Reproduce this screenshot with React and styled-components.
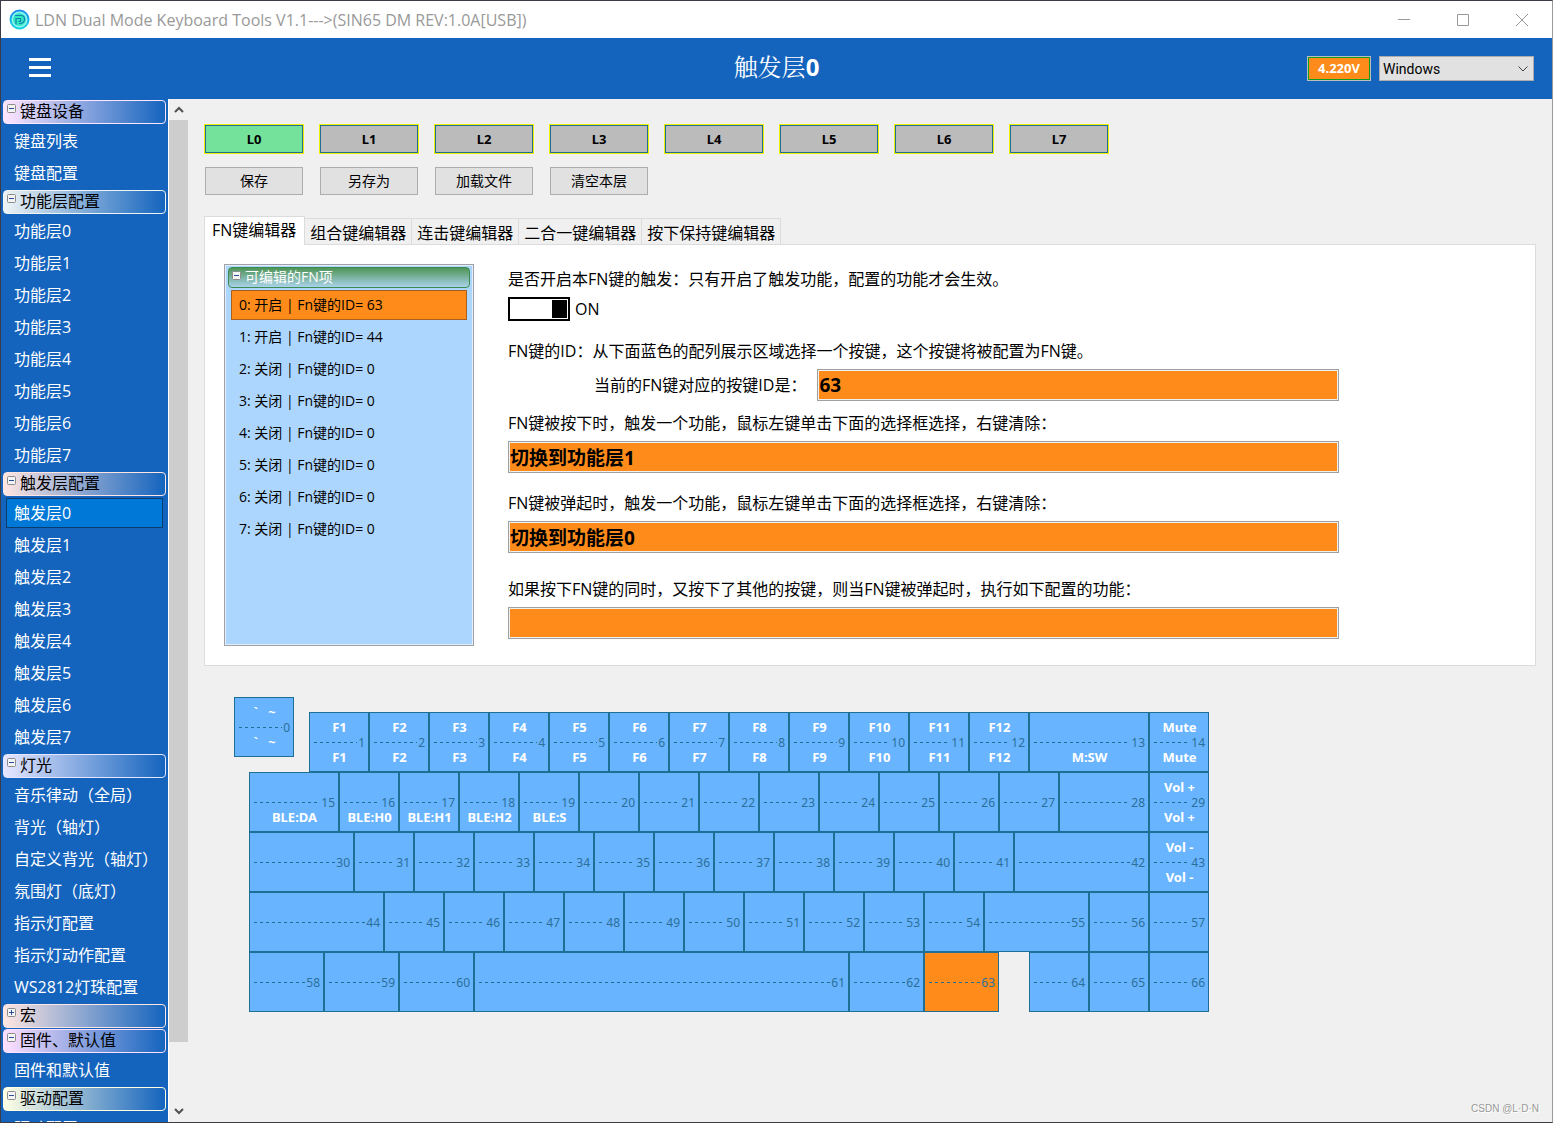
import React, { useState } from 'react';
import styled, { createGlobalStyle, css } from 'styled-components';

const GlobalStyle = createGlobalStyle`
  *, *::before, *::after {
    box-sizing: border-box;
  }
  body {
    margin: 0;
    background: #3c3c46;
    color: #000;
    font-family: "Open Sans", "Noto Sans CJK SC", sans-serif;
    font-size: 16px;
    line-height: 24px;
  }
  button, input, select {
    margin: 0;
    font: inherit;
    color: inherit;
  }
`

// frame
const Window = styled.div`
  position: relative;
  display: flex;
  flex-direction: column;
  height: 100vh;
  border: 1px solid #3c3c46;
  border-right-color: #9a9a9a;
  background: #f0f0f0;
  overflow: hidden;
`

const TitleBar = styled.header`
  display: flex;
  align-items: center;
  flex: none;
  height: 37px;
  padding: 0 1px 0 8px;
  background: #fff;
  color: #999;
`

const AppName = styled.span`
  flex: 1;
  padding-left: 5px;
`

const WindowButton = styled.button`
  display: flex;
  align-items: center;
  justify-content: center;
  width: 59px;
  height: 36px;
  padding: 0;
  border: 0;
  background: none;
  color: #999;
`

const Toolbar = styled.div`
  display: grid;
  grid-template-columns: 1fr auto 1fr;
  align-items: center;
  flex: none;
  height: 61px;
  padding: 0 18px;
  background: #1464be;
  color: #fff;
`

const MenuButton = styled.button`
  display: flex;
  flex-direction: column;
  gap: 5px;
  width: 22px;
  margin: 0 0 2px 10px;
  padding: 0;
  border: 0;
  background: none;
  span {
    height: 3px;
    background: #fff;
  }
`

const PageTitle = styled.h1`
  margin: 0;
  padding-bottom: 4px;
  font-family: "Noto Sans", "Noto Serif CJK SC", "Noto Sans CJK SC", serif;
  font-size: 24px;
  line-height: 32px;
  font-weight: 700;
  span {
    font-weight: 400;
  }
`

const ToolbarEnd = styled.div`
  display: flex;
  justify-content: flex-end;
  gap: 8px;
`

const Voltage = styled.output`
  width: 64px;
  height: 25px;
  border: 1px solid #bdbdbd;
  outline: 1px solid #0f9d1e;
  outline-offset: -2px;
  background: #ff8c1a;
  font-family: "Noto Sans", sans-serif;
  font-size: 13px;
  line-height: 23px;
  font-weight: 700;
  text-align: center;
`

const SystemSelect = styled.select`
  width: 155px;
  height: 25px;
  padding: 0 3px;
  appearance: none;
  border: 1px solid #acacac;
  border-radius: 0;
  background: #e1e1e1 url("data:image/svg+xml,%3Csvg xmlns='http://www.w3.org/2000/svg' width='10' height='6' fill='none' stroke='%23444'%3E%3Cpath d='M.5.5 5 5 9.500.5'/%3E%3C/svg%3E") no-repeat right 5px center;
  color: #000;
  font-family: Roboto, sans-serif;
  font-size: 14px;
  line-height: 22px;
`

const Body = styled.div`
  display: flex;
  flex: 1;
  min-height: 0;
`

// sidebar
const Sidebar = styled.nav`
  flex: none;
  width: 167px;
  padding-top: 1px;
  background: #1464be;
  overflow: hidden;
`

const GroupHeader = styled.button`
  display: flex;
  align-items: flex-start;
  width: 163px;
  height: 24px;
  margin: 0 2px 1px;
  padding: 3px 3px 0;
  gap: 4px;
  border: 1px solid ${props => props.$tint};
  border-radius: 4px;
  background: linear-gradient(to right, ${props => props.$tint}, #1464be);
  line-height: 14px;
  text-align: left;
`

const ExpandBox = styled.svg`
  flex: none;
  display: block;
`

const GroupItems = styled.div`
  display: grid;
  gap: 2px;
  padding: 1px 5px 2px;
`

const Item = styled.a`
  height: 30px;
  padding-left: 7px;
  border: 1px solid transparent;
  color: #fff;
  line-height: 28px;
  text-decoration: none;
  white-space: nowrap;
  ${props => props.$active && css`
    border-color: #0a3c6e;
    background: #0078d7;
  `}
`

const ScrollTrack = styled.div`
  display: flex;
  flex-direction: column;
  align-items: center;
  flex: none;
  width: 20px;
  border-left: 1px solid #fff;
`

const ScrollThumb = styled.div`
  flex: 1;
  width: 100%;
  margin-bottom: 59px;
  background: #cdcdcd;
`

const ScrollButton = styled.button`
  display: flex;
  align-items: center;
  justify-content: center;
  width: 19px;
  height: 21px;
  padding: 0;
  border: 0;
  background: none;
`

// main area
const Main = styled.main`
  flex: 1;
  min-width: 0;
  padding: 25px 16px 0;
`

const LayerRow = styled.div`
  display: flex;
  gap: 15px;
`

const LayerButton = styled.button`
  width: 100px;
  height: 30px;
  padding: 0;
  border: 1px solid #f0f000;
  outline: 1px solid #1f6f95;
  outline-offset: -2px;
  background: ${props => (props.$active ? '#74e29a' : '#bbb')};
  font-family: "Noto Sans", sans-serif;
  font-size: 13px;
  font-weight: 700;
`

const ActionRow = styled.div`
  display: flex;
  gap: 17px;
  margin: 13px 1px 21px;
`

const ActionButton = styled.button`
  width: 98px;
  height: 28px;
  padding: 0;
  border: 1px solid #adadad;
  background: #e1e1e1;
  font-size: 14px;
  line-height: 24px;
`

const Tabs = styled.div`
  display: flex;
  align-items: flex-end;
`

const Tab = styled.button`
  height: 26px;
  padding: 2px 5px 0;
  border: 1px solid #dcdcdc;
  border-width: 1px 1px 0 0;
  background: #f0f0f0;
  line-height: 24px;
  ${props => props.$active && css`
    height: 29px;
    margin-bottom: -1px;
    padding: 0 8px 2px 7px;
    border-left-width: 1px;
    background: #fff;
  `}
`

const Panel = styled.section`
  display: flex;
  gap: 34px;
  padding: 19px;
  border: 1px solid #dcdcdc;
  background: #fff;
`

const FnList = styled.div`
  flex: none;
  width: 250px;
  min-height: 382px;
  padding: 1px 2px;
  border: 1px solid #a0a0a8;
  box-shadow: inset 0 0 0 1px #e4eefa;
  background: #add6ff;
  font-size: 14px;
`

const FnListHeader = styled.button`
  display: flex;
  align-items: flex-start;
  gap: 4px;
  width: 242px;
  height: 21px;
  margin: 1px 1px 2px;
  padding: 3px 3px 0;
  border: 1px solid #3c8c50;
  border-radius: 4px;
  background: linear-gradient(#4f9558, #a9d2ea);
  color: #fff;
  line-height: 12px;
`

const FnItem = styled.button`
  display: block;
  width: 236px;
  height: 30px;
  margin: 0 4px 2px;
  padding: 0 7px 1px;
  border: 1px solid transparent;
  background: none;
  line-height: 26px;
  text-align: left;
  ${props => props.$active && css`
    border-color: #a8601c;
    background: #ff8c1a;
  `}
`

const Form = styled.div`
  display: flex;
  flex-direction: column;
  flex: 1;
  max-width: 831px;
  padding-top: 3px;
`

const Field = styled.div`
  display: flex;
  flex-direction: column;
  gap: 6px;
  margin-bottom: ${props => props.$space || 18}px;
`

const Inline = styled.div`
  display: flex;
  align-items: center;
  gap: ${props => props.$gap}px;
  padding-left: ${props => props.$indent || 0}px;
`

const Switch = styled.input`
  width: 62px;
  height: 24px;
  appearance: none;
  border: 2px solid #000;
  background: linear-gradient(#000, #000) no-repeat left 1px center / 15px 18px #fff;
  &:checked {
    background-position: right 1px center;
  }
`

const TextBox = styled.input`
  flex: 1 0 auto;
  min-width: 0;
  height: 32px;
  padding: 0 1px 1px;
  border: 1px solid #a0a0a0;
  border-radius: 0;
  box-shadow: inset 0 0 0 1px #f0f0f0;
  background: #ff8c1a;
  font-family: "Noto Sans", "Noto Sans CJK SC", sans-serif;
  font-size: 19px;
  line-height: 27px;
  font-weight: 700;
`

// keyboard, 4 grid steps make one key unit
const Keyboard = styled.div`
  display: grid;
  grid-template-columns: repeat(65, 15px);
  grid-template-rows: repeat(21, 15px);
  margin: 31px 0 0 30px;
`

const Key = styled.button`
  grid-area: ${props => props.$row} / ${props => props.$col} / span 4 / span ${props => props.$span};
  display: grid;
  grid-template-rows: repeat(3, 15px);
  align-content: center;
  padding: 0 3px 0 4px;
  border: 1px solid #1f6f95;
  background: ${props => (props.$active ? '#ff8c1a' : '#69b4ff')};
  color: #fff;
  font-family: "Noto Sans", sans-serif;
  font-size: 13px;
  line-height: 15px;
  font-weight: 700;
  text-align: center;
  white-space: pre;
`

const KeyMiddle = styled.span`
  display: flex;
  align-items: center;
  justify-content: space-between;
  color: #2a7099;
  font-size: 12px;
  font-weight: 400;
`

const Dashes = styled.span`
  flex: none;
  width: ${props => props.$length}px;
  height: 1px;
  background: repeating-linear-gradient(to right, #1f6f95 0 3px, transparent 3px 6px);
`

const Watermark = styled.span`
  position: absolute;
  right: 13px;
  bottom: 5px;
  color: #999;
  font-family: "Liberation Sans", sans-serif;
  font-size: 10px;
  line-height: 16px;
  text-shadow: 1px 1px 0 #fff;
`

const range = (prefix, count) => Array.from({ length: count }, (_, i) => `${prefix}${i}`);

const groups = [
  { title: '键盘设备', tint: '#ffe6ff', items: ['键盘列表', '键盘配置'] },
  { title: '功能层配置', tint: '#eef4f4', items: range('功能层', 8) },
  { title: '触发层配置', tint: '#ffe6e2', items: range('触发层', 8) },
  {
    title: '灯光',
    tint: '#e6e6ff',
    items: ['音乐律动（全局）', '背光（轴灯）', '自定义背光（轴灯）', '氛围灯（底灯）', '指示灯配置', '指示灯动作配置', 'WS2812灯珠配置'],
  },
  { title: '宏', tint: '#ffe6e2', items: [] },
  { title: '固件、默认值', tint: '#ffe0ff', items: ['固件和默认值'] },
  { title: '驱动配置', tint: '#ffffe4', items: ['驱动配置'] },
];

const tabs = ['FN键编辑器', '组合键编辑器', '连击键编辑器', '二合一键编辑器', '按下保持键编辑器'];

const fnIds = [63, 44, 0, 0, 0, 0, 0, 0];

const labels = {
  0: ['`   ~', '`   ~'],
  13: ['', 'M:SW'],
  14: ['Mute', 'Mute'],
  15: ['', 'BLE:DA'],
  16: ['', 'BLE:H0'],
  17: ['', 'BLE:H1'],
  18: ['', 'BLE:H2'],
  19: ['', 'BLE:S'],
  29: ['Vol +', 'Vol +'],
  43: ['Vol -', 'Vol -'],
};
for (let i = 1; i <= 12; i++) labels[i] = [`F${i}`, `F${i}`];

// each row: first column, then key widths in grid steps (negative = empty space)
const rows = [
  { row: 1, col: 1, spans: [4] },
  { row: 2, col: 6, spans: [...Array(12).fill(4), 8, 4] },
  { row: 6, col: 2, spans: [6, ...Array(12).fill(4), 6, 4] },
  { row: 10, col: 2, spans: [7, ...Array(11).fill(4), 9, 4] },
  { row: 14, col: 2, spans: [9, ...Array(10).fill(4), 7, 4, 4] },
  { row: 18, col: 2, spans: [5, 5, 5, 25, 5, 5, -2, 4, 4, 4] },
];

const keys = [];
rows.forEach(({ row, col, spans }) => {
  spans.forEach(span => {
    if (span > 0) keys.push({ id: keys.length, row, col, span });
    col += Math.abs(span);
  });
});

// only whole dashes fit before a two digit number
const dashLength = ({ id, span }) => (id < 10 ? 43 : Math.floor((span * 15 - 20) / 6) * 6 - 3);

const Expander = ({ open }) => (
  <ExpandBox width="9" height="9" viewBox="0 0 9 9">
    <rect x="0.5" y="0.5" width="8" height="8" rx="1" fill="#f4f4f4" stroke="#8c8c8c" />
    <path d={open ? 'M2 4.500h5' : 'M2 4.500h5M4.500 2v5'} stroke="#2c4c9c" />
  </ExpandBox>
);

const Chevron = ({ up }) => (
  <svg width="10" height="7" viewBox="0 0 10 7" fill="none" stroke="#505050" strokeWidth="2">
    <path d={up ? 'M1 6l4-4 4 4' : 'M1 1l4 4 4-4'} />
  </svg>
);

const Logo = () => (
  <svg width="21" height="21" viewBox="0 0 21 21">
    <defs>
      <linearGradient id="ring" x1="0" y1="0" x2="0" y2="1">
        <stop offset="0" stopColor="#1e8cf0" />
        <stop offset="1" stopColor="#10d4e0" />
      </linearGradient>
    </defs>
    <circle cx="10.500" cy="10.500" r="9" fill="#8ff4f0" stroke="url(#ring)" strokeWidth="2" />
    <circle cx="10.500" cy="10.500" r="6.500" fill="#30e8c0" />
    <path d="M6 6.500h6q3.500 0 3.500 3.500t-3.500 4.500H10M7 15.500V9.500h4.500v3H9.500" fill="none" stroke="#1480b8" strokeWidth="1.200" />
  </svg>
);

function App() {
  const [layer, setLayer] = useState(0);
  const [tab, setTab] = useState(0);
  const [fn, setFn] = useState(0);
  const [enabled, setEnabled] = useState(true);
  const [page, setPage] = useState('触发层0');

  return (
    <Window>
      <GlobalStyle />
      <TitleBar>
        <Logo />
        <AppName>LDN Dual Mode Keyboard Tools V1.1---&gt;(SIN65 DM REV:1.0A[USB])</AppName>
        <WindowButton aria-label="最小化">
          <svg width="12" height="12" stroke="currentColor"><path d="M0 5.500h12" /></svg>
        </WindowButton>
        <WindowButton aria-label="最大化">
          <svg width="12" height="12" stroke="currentColor" fill="none"><path d="M.5.5h11v11H.5z" /></svg>
        </WindowButton>
        <WindowButton aria-label="关闭">
          <svg width="12" height="12" stroke="currentColor"><path d="M0 0l12 12M12 0L0 12" /></svg>
        </WindowButton>
      </TitleBar>
      <Toolbar>
        <MenuButton aria-label="菜单"><span /><span /><span /></MenuButton>
        <PageTitle><span>触发层</span>0</PageTitle>
        <ToolbarEnd>
          <Voltage>4.220V</Voltage>
          <SystemSelect aria-label="系统" defaultValue="Windows">
            <option>Windows</option>
            <option>Mac</option>
          </SystemSelect>
        </ToolbarEnd>
      </Toolbar>
      <Body>
        <Sidebar>
          {groups.map(group => (
            <div key={group.title}>
              <GroupHeader $tint={group.tint} aria-expanded={group.items.length > 0}>
                <Expander open={group.items.length > 0} />
                {group.title}
              </GroupHeader>
              {group.items.length > 0 && (
                <GroupItems>
                  {group.items.map(item => (
                    <Item key={item} href="#" $active={item === page} onClick={() => setPage(item)}>{item}</Item>
                  ))}
                </GroupItems>
              )}
            </div>
          ))}
        </Sidebar>
        <ScrollTrack>
          <ScrollButton aria-label="向上"><Chevron up /></ScrollButton>
          <ScrollThumb />
          <ScrollButton aria-label="向下"><Chevron /></ScrollButton>
        </ScrollTrack>
        <Main>
          <LayerRow>
            {range('L', 8).map((name, i) => (
              <LayerButton key={name} $active={i === layer} onClick={() => setLayer(i)}>{name}</LayerButton>
            ))}
          </LayerRow>
          <ActionRow>
            {['保存', '另存为', '加载文件', '清空本层'].map(name => (
              <ActionButton key={name}>{name}</ActionButton>
            ))}
          </ActionRow>
          <Tabs role="tablist">
            {tabs.map((name, i) => (
              <Tab key={name} role="tab" aria-selected={i === tab} $active={i === tab} onClick={() => setTab(i)}>{name}</Tab>
            ))}
          </Tabs>
          <Panel>
            <FnList>
              <FnListHeader>
                <Expander open />
                可编辑的FN项
              </FnListHeader>
              {fnIds.map((id, i) => (
                <FnItem key={i} $active={i === fn} onClick={() => setFn(i)}>
                  {i}: {id ? '开启' : '关闭'} | Fn键的ID= {id}
                </FnItem>
              ))}
            </FnList>
            <Form>
              <Field>
                <label htmlFor="enabled">是否开启本FN键的触发：只有开启了触发功能，配置的功能才会生效。</label>
                <Inline $gap={5}>
                  <Switch id="enabled" type="checkbox" role="switch" checked={enabled} onChange={() => setEnabled(!enabled)} />
                  <span>{enabled ? 'ON' : 'OFF'}</span>
                </Inline>
              </Field>
              <Field $space={10}>
                <span>FN键的ID：从下面蓝色的配列展示区域选择一个按键，这个按键将被配置为FN键。</span>
                <Inline $gap={11} $indent={86}>
                  <label htmlFor="fn-id">当前的FN键对应的按键ID是：</label>
                  <TextBox id="fn-id" defaultValue="63" />
                </Inline>
              </Field>
              <Field>
                <label htmlFor="on-press">FN键被按下时，触发一个功能，鼠标左键单击下面的选择框选择，右键清除：</label>
                <TextBox id="on-press" defaultValue="切换到功能层1" />
              </Field>
              <Field $space={24}>
                <label htmlFor="on-release">FN键被弹起时，触发一个功能，鼠标左键单击下面的选择框选择，右键清除：</label>
                <TextBox id="on-release" defaultValue="切换到功能层0" />
              </Field>
              <Field $space={1}>
                <label htmlFor="on-combo">如果按下FN键的同时，又按下了其他的按键，则当FN键被弹起时，执行如下配置的功能：</label>
                <TextBox id="on-combo" />
              </Field>
            </Form>
          </Panel>
          <Keyboard>
            {keys.map(key => {
              const [top, bottom] = labels[key.id] || ['', ''];
              return (
                <Key key={key.id} $row={key.row} $col={key.col} $span={key.span} $active={key.id === fnIds[fn]}>
                  <span>{top}</span>
                  <KeyMiddle><Dashes $length={dashLength(key)} />{key.id}</KeyMiddle>
                  <span>{bottom}</span>
                </Key>
              );
            })}
          </Keyboard>
        </Main>
      </Body>
      <Watermark>CSDN @L·D·N</Watermark>
    </Window>
  );
}

export default App;
